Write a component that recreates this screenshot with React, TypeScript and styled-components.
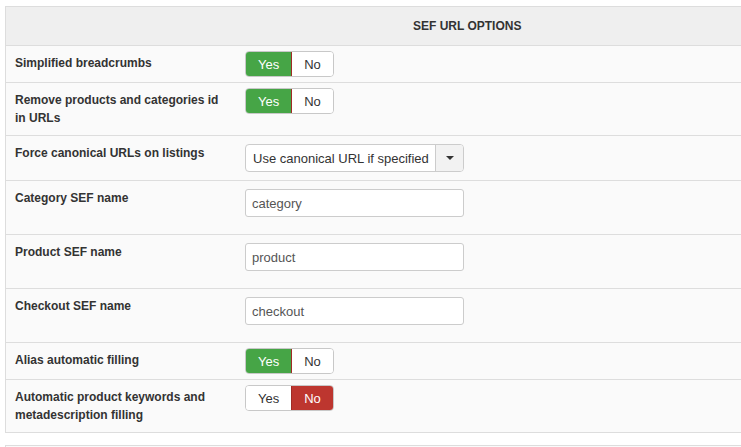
import React from 'react';
import styled, { createGlobalStyle } from 'styled-components';

const GlobalStyle = createGlobalStyle`
    body {
        margin: 0;
        background: #fff;
        font-family: "Liberation Sans", Arial, sans-serif;
        color: #333;
        overflow: hidden;
    }
`;

const Page = styled.div`
    padding: 6px 0 0 5px;
`;

const Panel = styled.div`
    border: 1px solid #dddddd;
    border-right: none;
    background: #fafafa;
`;

const NextPanel = styled.div`
    margin-top: 12px;
    height: 20px;
    border-top: 1px solid #dddddd;
    border-left: 1px solid #dddddd;
    background: #fafafa;
`;

const Header = styled.div`
    height: 38px;
    line-height: 38px;
    background: #efefef;
    border-bottom: 1px solid #dddddd;
    padding-left: 407px;
    font-size: 12px;
    font-weight: bold;
    text-transform: uppercase;
    color: #333;
`;

const Row = styled.div`
    display: grid;
    grid-template-columns: 239px 1fr;
    align-items: start;
    border-bottom: 1px solid #dddddd;
    &:last-child {
        border-bottom: none;
    }
`;

const Label = styled.div`
    padding: 8px 20px 8px 9px;
    font-size: 12px;
    font-weight: bold;
    line-height: 18px;
    color: #333;
`;

const Control = styled.div<{ $kind: 'toggle' | 'select' | 'input' }>`
    padding-top: ${p => (p.$kind === 'toggle' ? '5px' : '8px')};
    padding-bottom: ${p => (p.$kind === 'toggle' ? '5px' : p.$kind === 'select' ? '8px' : '17px')};
`;

const Toggle = styled.div`
    display: inline-flex;
    height: 26px;
    border: 1px solid #c8c8c8;
    border-radius: 4px;
    overflow: hidden;
    box-sizing: border-box;
`;

const ToggleButton = styled.span<{ $active: boolean; $tone: 'yes' | 'no' }>`
    display: flex;
    align-items: center;
    padding: 0 12px;
    font-size: 13px;
    color: ${p => (p.$active ? '#fff' : '#333')};
    background: ${p => (!p.$active ? '#fff' : p.$tone === 'yes' ? '#46a546' : '#bd362f')};
    & + & {
        border-left: 1px solid ${p => (p.$active ? (p.$tone === 'yes' ? '#3d8b3d' : '#a02c26') : '#c8c8c8')};
    }
`;

const Select = styled.div`
    display: inline-flex;
    width: 219px;
    height: 28px;
    box-sizing: border-box;
    border: 1px solid #cccccc;
    border-radius: 4px;
    background: #fff;
    overflow: hidden;
`;

const SelectValue = styled.span`
    flex: 1;
    display: flex;
    align-items: center;
    padding-left: 7px;
    font-size: 13px;
    color: #333;
    white-space: nowrap;
`;

const SelectCaret = styled.span`
    width: 27px;
    display: flex;
    align-items: center;
    justify-content: center;
    border-left: 1px solid #cccccc;
    background: #f2f2f2;
    &::after {
        content: '';
        border-top: 4px solid #333;
        border-left: 4px solid transparent;
        border-right: 4px solid transparent;
    }
`;

const TextInput = styled.input`
    display: block;
    width: 219px;
    height: 28px;
    box-sizing: border-box;
    border: 1px solid #cccccc;
    border-radius: 3px;
    padding: 0 6px;
    font-family: "Liberation Sans", Arial, sans-serif;
    font-size: 13px;
    color: #555;
    background: #fff;
    outline: none;
`;

type YesNoProps = { value: boolean };

const YesNo: React.FC<YesNoProps> = ({ value }) => (
    <Toggle>
        <ToggleButton $active={value} $tone="yes">Yes</ToggleButton>
        <ToggleButton $active={!value} $tone="no">No</ToggleButton>
    </Toggle>
);

type Option =
    | { label: string; type: 'toggle'; value: boolean }
    | { label: string; type: 'select'; value: string }
    | { label: string; type: 'input'; value: string };

const options: Option[] = [
    { label: 'Simplified breadcrumbs', type: 'toggle', value: true },
    { label: 'Remove products and categories id in URLs', type: 'toggle', value: true },
    { label: 'Force canonical URLs on listings', type: 'select', value: 'Use canonical URL if specified' },
    { label: 'Category SEF name', type: 'input', value: 'category' },
    { label: 'Product SEF name', type: 'input', value: 'product' },
    { label: 'Checkout SEF name', type: 'input', value: 'checkout' },
    { label: 'Alias automatic filling', type: 'toggle', value: true },
    { label: 'Automatic product keywords and metadescription filling', type: 'toggle', value: false },
];

const App: React.FC = () => (
    <>
        <GlobalStyle />
        <Page>
            <Panel>
                <Header>SEF URL options</Header>
                {options.map(opt => (
                    <Row key={opt.label}>
                        <Label>{opt.label}</Label>
                        <Control $kind={opt.type}>
                            {opt.type === 'toggle' && <YesNo value={opt.value} />}
                            {opt.type === 'select' && (
                                <Select>
                                    <SelectValue>{opt.value}</SelectValue>
                                    <SelectCaret />
                                </Select>
                            )}
                            {opt.type === 'input' && <TextInput defaultValue={opt.value} />}
                        </Control>
                    </Row>
                ))}
            </Panel>
            <NextPanel />
        </Page>
    </>
);

export default App;
